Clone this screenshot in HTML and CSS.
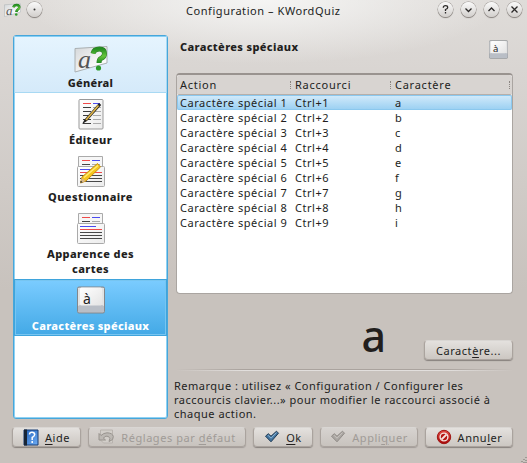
FILE: index.html
```html
<!DOCTYPE html>
<html lang="fr">
<head>
<meta charset="utf-8">
<title>Configuration – KWordQuiz</title>
<link rel="stylesheet" href="styles.css">
</head>
<body>
<svg class="defs" width="0" height="0">
  <defs>
    <linearGradient id="paper" x2="1" y2="1"><stop stop-color="#fff"/><stop offset="1" stop-color="#ececec"/></linearGradient>
    <linearGradient id="plate" x2="1" y2="1"><stop stop-color="#d4d7d9"/><stop offset=".7" stop-color="#fafafa"/></linearGradient>
    <linearGradient id="green" x2="0" y2="1"><stop stop-color="#258f22"/><stop offset=".5" stop-color="#65c53a"/><stop offset="1" stop-color="#218b20"/></linearGradient>
    <linearGradient id="key" x2="1" y2="1"><stop stop-color="#fff"/><stop offset="1" stop-color="#e4e4e4"/></linearGradient>
    <linearGradient id="book" x2="1" y2="1"><stop stop-color="#2161ba"/><stop offset="1" stop-color="#70aef5"/></linearGradient>
    <linearGradient id="red" x2="0" y2="1"><stop stop-color="#e34a43"/><stop offset="1" stop-color="#a50808"/></linearGradient>
    <symbol id="quiz" viewBox="0 0 34 28">
      <path d="M1 3.500 33 1.500V18L1 27Z" fill="url(#plate)" stroke="#aab0b2"/>
      <text x="4" y="23" class="script-a">a</text>
      <path d="M19 8.500Q20 4 25.500 4Q30.500 4 30.500 8.500Q30.500 12 27 13.500Q25 14.500 25 18" fill="none" stroke="#287b25" stroke-width="5"/>
      <path d="M19 8.500Q20 4 25.500 4Q30.500 4 30.500 8.500Q30.500 12 27 13.500Q25 14.500 25 18" fill="none" stroke="url(#green)" stroke-width="4"/>
      <circle cx="24.500" cy="23" r="2.600" fill="#2f9b2a"/>
    </symbol>
    <symbol id="cards" viewBox="0 0 28 32">
      <path d="M1.500 .500h24v12h-24z" fill="#f6f6f6" stroke="#aaa"/>
      <path d="M5 4.500h8" stroke="#ef4a4a"/><path d="M15 4.500h8" stroke="#4b4bf0"/><path d="M5 8.500h8" stroke="#444"/><path d="M15 8.500h8" stroke="#aaa"/>
      <path d="M.5 11.500Q.5 10.500 1.500 10.500h25q1 0 1 1v18q0 1-1 1h-25q-1 0-1-1z" fill="url(#paper)" stroke="#aaa"/>
      <path d="M3 13.500h16" stroke="#4b4bf0"/><path d="M3 16.500h22" stroke="#ef4a4a"/>
      <path d="M3 19.500h22M3 22.500h22M3 25.500h22" stroke="#484848"/>
    </symbol>
    <symbol id="keycap" viewBox="0 0 28 28">
      <rect x=".5" y="1" width="27" height="26" rx="1.500" fill="#c3c7ce" stroke="#82878c"/>
      <path d="M1 20 3 18.500h22l2 1.500v6H1z" fill="#b9bec6"/>
      <path d="M1 2h26v18l-2-1H3l-2 1z" fill="#e2e3e3"/>
      <rect x="3" y="1.500" width="22" height="18" rx="1.500" fill="url(#key)"/>
      <text x="6" y="18" class="key-letter">à</text>
    </symbol>
    <symbol id="check" viewBox="0 0 16 14">
      <path d="M1.500 6.200 4.300 3.700 7 6.200 12.500 1.200 14.500 3.200 7 11.800Z" fill="currentColor" stroke="var(--edge)" stroke-linejoin="round"/>
      <path d="M4 5.200 7 8.200 12.500 2.600" fill="none" stroke="var(--shine)" stroke-width=".8"/>
    </symbol>
  </defs>
</svg>

<header class="titlebar">
  <svg class="app-icon" width="17" height="14"><use href="#quiz"/></svg>
  <span class="round"><svg viewBox="0 0 15 15"><circle cx="7.500" cy="7.500" r="1" fill="#333"/></svg></span>
  <h1>Configuration – KWordQuiz</h1>
  <div class="controls">
    <span class="round"><svg viewBox="0 0 15 15"><path d="M5.300 5.800Q5.300 3.700 7.500 3.700T9.700 5.500Q9.700 6.700 7.500 7.500V9M7.500 10v1.500"/></svg></span>
    <span class="round"><svg viewBox="0 0 15 15"><path d="m4.500 6.500 3 3 3-3"/></svg></span>
    <span class="round"><svg viewBox="0 0 15 15"><path d="m4.500 9 3-3 3 3"/></svg></span>
    <span class="round"><svg viewBox="0 0 15 15"><path d="m4.500 4.500 6 6m0-6-6 6"/></svg></span>
  </div>
</header>

<main>
  <nav>
    <a class="item hover"><svg width="34" height="28"><use href="#quiz"/></svg><span>Général</span></a>
    <a class="item"><svg width="26" height="31" viewBox="0 0 26 31">
      <rect x="1" y=".5" width="24" height="29.500" rx="1" fill="url(#paper)" stroke="#999"/>
      <path d="M5 4.500h8" stroke="#ef4a4a"/><path d="M15 4.500h7" stroke="#4b4bf0"/>
      <path d="M5 8.500h8M5 12.500h8M5 16.500h8M5 20.500h8M5 24.500h8" stroke="#3c3c3c"/><path d="M15 8.500h8M15 12.500h8M15 16.500h8M15 20.500h8M15 24.500h8" stroke="#aaa"/>
      <path d="m4.200 25 2.300-4.500L21 4l2.200 2L9 22z" fill="#222"/><path d="M8 21 20.500 6.500" stroke="#ddb348" stroke-width="1.800"/>
    </svg><span>Éditeur</span></a>
    <a class="item"><svg width="28" height="32"><use href="#cards"/><path d="m3.500 27 1.500-6L20.500 7.500l3 3.500L9 25z" fill="#f5c51d" stroke="#c88f10"/><path d="m7 21.500 14-12" stroke="#ffec75" stroke-width="1.500"/><path d="m3.500 27 1.200-5 4 3z" fill="#d8b88a"/><path d="m3.300 27 .7-2.300 1.600 1.500z" fill="#333"/></svg><span>Questionnaire</span></a>
    <a class="item tall"><svg width="28" height="32"><use href="#cards"/></svg><span>Apparence des<br>cartes</span></a>
    <a class="item selected"><svg width="28" height="28"><use href="#keycap"/></svg><span>Caractères spéciaux</span></a>
  </nav>

  <section>
    <div class="heading"><h2>Caractères spéciaux</h2><svg width="19" height="19"><use href="#keycap"/></svg></div>
    <div class="table">
      <div class="row head"><span>Action</span><span>Raccourci</span><span>Caractère</span></div>
      <div class="row current"><span>Caractère spécial 1</span><span>Ctrl+1</span><span>a</span></div>
      <div class="row"><span>Caractère spécial 2</span><span>Ctrl+2</span><span>b</span></div>
      <div class="row"><span>Caractère spécial 3</span><span>Ctrl+3</span><span>c</span></div>
      <div class="row"><span>Caractère spécial 4</span><span>Ctrl+4</span><span>d</span></div>
      <div class="row"><span>Caractère spécial 5</span><span>Ctrl+5</span><span>e</span></div>
      <div class="row"><span>Caractère spécial 6</span><span>Ctrl+6</span><span>f</span></div>
      <div class="row"><span>Caractère spécial 7</span><span>Ctrl+7</span><span>g</span></div>
      <div class="row"><span>Caractère spécial 8</span><span>Ctrl+8</span><span>h</span></div>
      <div class="row"><span>Caractère spécial 9</span><span>Ctrl+9</span><span>i</span></div>
    </div>
    <div class="preview"><span class="glyph">a</span><button class="choose"><span>Caract<u>è</u>re...</span></button></div>
    <hr>
    <p>Remarque : utilisez « Configuration / Configurer les<br>raccourcis clavier...» pour modifier le raccourci associé à<br>chaque action.</p>
  </section>
</main>

<footer>
  <button class="help"><svg width="16" height="17" viewBox="0 0 16 17"><path d="M1 1h14v15H1z" fill="url(#book)" stroke="#173b73"/><path d="M1 .5h3v16H1z" fill="#182536"/><path d="M6.500 5.500Q6.500 3.300 9 3.300T11.700 5.500Q11.700 7 9.200 8.500V11M9.200 12v2" fill="none" stroke="#fff" stroke-width="1.500"/></svg><span><u>A</u>ide</span></button>
  <button class="defaults off"><svg width="17" height="16" viewBox="0 0 17 16"><path d="M2.500 1h12v13h-9l-3-3z" fill="#d2cec9" stroke="#b8b3ae"/><path d="M1 4.500v6.500h6.500L5.300 9Q8 6 10.500 7.500T11 12.500Q16 11 15.300 7.500T9 3.800Q5.500 4 3 6.500z" fill="#bcb8b3" stroke="#98938e"/></svg><span>Réglages par <u>d</u>éfaut</span></button>
  <button class="ok"><svg width="16" height="14"><use href="#check"/></svg><span><u>O</u>k</span></button>
  <button class="apply off"><svg width="16" height="14"><use href="#check"/></svg><span>Appli<u>q</u>uer</span></button>
  <button class="cancel"><svg width="16" height="16" viewBox="0 0 16 16"><circle cx="8" cy="8" r="6.700" fill="url(#red)" stroke="#a01614"/><circle cx="8" cy="8" r="3.900" fill="#b51512" stroke="#f4e3df" stroke-width="1.400"/><path d="m5.500 10.500 5-5" stroke="#f4e3df" stroke-width="1.800"/></svg><span>Annu<u>l</u>er</span></button>
</footer>
<svg class="grip" width="6" height="6"><path d="M5 0v1M3 2v1M5 3v1M1 4v1M3 5v1M5 5v1" stroke="#77716d"/></svg>
</body>
</html>
```
FILE: styles.css
```css
* { box-sizing: border-box; }
body {
  margin: 0;
  width: 527px;
  height: 463px;
  overflow: hidden;
  display: flex;
  flex-direction: column;
  font: 11px/15px "Noto Sans", "Open Sans", sans-serif;
  letter-spacing: .45px;
  color: #221e1d;
  background:
    radial-gradient(ellipse 240px 64px at 50% 0, #f5f5f4 0, #f5f5f400 100%),
    linear-gradient(#dfdcd9 0, #d8d4d1 80px, #c8c2bd 290px);
}
.defs { position: absolute; }
svg { display: block; flex: none; }
h1, h2, p { margin: 0; font-size: inherit; }
.titlebar { height: 35px; flex: none; display: flex; padding: 2px 5px 0 4px; }
.app-icon { margin-top: 1px; }
.round {
  width: 15px;
  height: 15px;
  margin-left: 6px;
  border-radius: 50%;
  background: linear-gradient(#fafafa, #d2cfcc);
  box-shadow: 0 0 0 .5px #96918d, 0 1px 1px #7d7773;
}
.round path { fill: none; stroke: #2b2928; stroke-width: 1.3; }
h1 { font-weight: 400; margin-left: 144px; line-height: 18px; letter-spacing: .56px; white-space: nowrap; }
.controls { display: flex; gap: 8px; margin-left: auto; }
.controls .round { margin-left: 0; }
main { height: 384px; flex: none; display: flex; padding: 0 14px 0 13px; }
nav {
  width: 155px;
  height: 384px;
  border: 1px solid #47a6da;
  border-radius: 3px;
  background: #fff;
  box-shadow: inset 0 0 0 1px #90d2f3;
  font-weight: 800;
  letter-spacing: .4px;
}
.item { height: 57px; display: flex; flex-direction: column; align-items: center; text-align: center; padding-top: 6px; }
.item span { margin-top: auto; padding-bottom: 3px; }
.hover { padding-top: 8px; background: linear-gradient(#e5f4fe, #d5eafa); border: 1px solid #a8d9f3; border-top-color: #87cff4; }
.hover span, .selected span { padding-bottom: 2px; }
.hover span { letter-spacing: .3px; }
.tall { height: 72px; }
.selected { color: #fff; background: linear-gradient(#7bccff, #43a9e6); border: 1px solid #3fa4dc; box-shadow: inset 0 0 0 1px #77c5f1; }
.selected span { letter-spacing: .3px; }
section { width: 337px; margin-left: 8px; }
.heading { height: 38px; display: flex; justify-content: space-between; padding: 5px 5px 0 4px; }
h2 { font-weight: 800; line-height: 14px; letter-spacing: .35px; }
.table { height: 221px; border: 1px solid #aaa5a1; border-top: 2px solid #99938f; border-radius: 4px; background: #fff; }
.row { display: grid; grid-template-columns: 115px 100px 1fr; height: 15px; padding-left: 3px; white-space: nowrap; letter-spacing: .55px; }
.head { height: 19px; line-height: 19px; background: #d8d4d1; border-radius: 3px 3px 0 0; letter-spacing: .75px; }
.head span { position: relative; }
.head span::after { content: ""; position: absolute; right: 4px; top: 6px; height: 8px; border-right: 1px dotted #8b8581; }
.head span:last-child::after { right: 2px; }
.current { margin-top: 1px; box-shadow: 0 -1px #b6afaa, inset 0 0 0 1px #8bc8ee; border-radius: 2px; background: linear-gradient(#d4ebfa, #99cff2); }
.preview { height: 75px; display: flex; justify-content: flex-end; align-items: flex-end; padding-bottom: 9px; }
.glyph { font-size: 43px; font-weight: 500; line-height: 48px; letter-spacing: 0; margin-right: 38px; }
button {
  height: 20px;
  padding: 0;
  border: 1px solid #aaa39e;
  border-top-color: #d9d6d3;
  border-radius: 4px;
  display: flex;
  align-items: center;
  justify-content: center;
  gap: 6px;
  color: inherit;
  font: inherit;
  letter-spacing: .55px;
  white-space: nowrap;
  background: linear-gradient(#e4e1de, #ccc7c2);
  box-shadow: 0 1px 1px #87817d;
}
u { text-underline-offset: 2px; }
.choose { width: 89px; }
hr { margin: 0; border: 0; height: 2px; background: linear-gradient(90deg, transparent, #aaa39e 20%, #aaa39e 80%, transparent) 0 0 / 100% 1px no-repeat, linear-gradient(90deg, transparent, #e2dfdd 20%, #e2dfdd 80%, transparent) 0 1px / 100% 1px no-repeat; }
p { margin: 8px 0 0 -2px; line-height: 14px; letter-spacing: .5px; white-space: nowrap; }
footer { display: flex; margin: 8px 14px 0 12px; }
.help { width: 69px; }
.defaults { width: 158px; margin-left: 7px; }
.ok { width: 60px; margin-left: 7px; }
.apply { width: 98px; margin-left: 7px; }
.cancel { width: 88px; margin-left: 7px; }
.ok svg { --edge: #213b55; --shine: #a5cae9; color: #42749e; }
.off { color: #a09b97; background: linear-gradient(#d7d3d0, #c8c3be); box-shadow: 0 1px 1px #a19b97; }
.off svg { --edge: #918c88; --shine: #d0ccc8; color: #aaa6a2; }
.grip { position: absolute; right: 0; bottom: 0; }
.script-a { font: italic 26px "Liberation Serif", serif; fill: #555; }
.key-letter { font: 14px "Noto Sans", sans-serif; fill: #222; letter-spacing: 0; }
```
